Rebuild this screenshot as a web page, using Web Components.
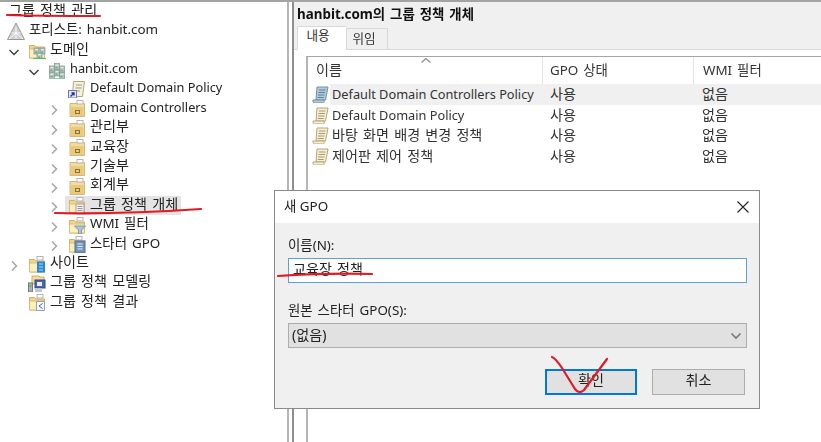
<!doctype html>
<html lang="ko">
<head>
<meta charset="utf-8">
<title>그룹 정책 관리</title>
<style>
  html, body { margin: 0; height: 100%; }
  body {
    width: 821px; height: 442px; overflow: hidden; position: relative;
    font: 13.4px "Noto Sans", "Noto Sans CJK KR", sans-serif;
    color: #222; background: #fff;
  }
  gp-console { height: 100%; }
  gp-console, gp-dialog, gp-marks { filter: blur(.3px); }
</style>
</head>
<body>
<gp-console>
  <gp-tree slot="tree">
    <gp-row x="9" icon="root" label="그룹 정책 관리"></gp-row>
    <gp-row x="29" icon="forest" label="포리스트: hanbit.com"></gp-row>
    <gp-row x="50" arrow="open" icon="domains" label="도메인"></gp-row>
    <gp-row x="70" arrow="open" icon="domain" label="hanbit.com"></gp-row>
    <gp-row x="90" icon="link" label="Default Domain Policy"></gp-row>
    <gp-row x="90" arrow="closed" icon="ou" label="Domain Controllers"></gp-row>
    <gp-row x="90" arrow="closed" icon="ou" label="관리부"></gp-row>
    <gp-row x="90" arrow="closed" icon="ou" label="교육장"></gp-row>
    <gp-row x="90" arrow="closed" icon="ou" label="기술부"></gp-row>
    <gp-row x="90" arrow="closed" icon="ou" label="회계부"></gp-row>
    <gp-row x="90" arrow="closed" icon="gpo-folder" label="그룹 정책 개체" selected></gp-row>
    <gp-row x="90" arrow="closed" icon="wmi" label="WMI 필터"></gp-row>
    <gp-row x="90" arrow="closed" icon="starter" label="스타터 GPO"></gp-row>
    <gp-row x="50" arrow="closed" icon="sites" label="사이트"></gp-row>
    <gp-row x="50" icon="modeling" label="그룹 정책 모델링"></gp-row>
    <gp-row x="50" icon="results" label="그룹 정책 결과"></gp-row>
  </gp-tree>
  <gp-panel slot="panel" heading="hanbit.com의 그룹 정책 개체">
    <gp-policy icon="scroll-blue" name="Default Domain Controllers Policy" selected></gp-policy>
    <gp-policy icon="scroll" name="Default Domain Policy"></gp-policy>
    <gp-policy icon="scroll" name="바탕 화면 배경 변경 정책"></gp-policy>
    <gp-policy icon="scroll" name="제어판 제어 정책"></gp-policy>
  </gp-panel>
</gp-console>
<gp-dialog heading="새 GPO"></gp-dialog>
<gp-marks></gp-marks>

<script>
// Malgun Gothic sets hangul larger and latin smaller than Noto does, so size by script
const tune = el => {
  let text = el.textContent
  let ko = /[가-힣]/.test(text), en = /[a-zA-Z]/.test(text)
  if (en && !ko) el.style.fontSize = '12.75px'
  if (ko && !en) { el.style.fontSize = '14.1px'; el.style.wordSpacing = '1.5px' }
  if (ko && en) el.style.wordSpacing = '1.5px'
}
const tuneAll = root => root.querySelectorAll('.t').forEach(tune)

const tab = (x = 9) => `<rect x="${x}" y="1.500" width="6" height="3.500" fill="#fff" stroke="#b5b5b5"/>`
const folder = (extra = '') => `
  <path d="M1.500 4.500h5l1.500 1.500h8.500v11h-15z" fill="#f2d48a" stroke="#cdb06c"/>
  <path d="M1.500 17V8h15v9z" fill="#fdeeba" stroke="#d8bd7c"/>${extra}`
const server = (x, y) => `<rect x="${x}" y="${y}" width="5" height="6" fill="#b4c2bf" stroke="#82938f" stroke-width=".7"/>
  <rect x="${x + 1}" y="${y + 1.200}" width="3" height="1" fill="#eef3f3"/><rect x="${x + 1}" y="${y + 3.600}" width="2" height="1.200" fill="#4fbf59"/>`
const scroll = (fill, line, dark) => `
  <path d="M5 2h11l-2.500 13h-9.500z" fill="${fill}" stroke="${line}"/>
  <path d="M1 15h11c.6 2-.2 3-1 3H2.500C1.300 18 .700 16.500 1 15z" fill="${fill}" stroke="${line}"/>
  <path d="M7 5h6.500M6.500 7.500H13M6 10h6.500M5.700 12.500h6" stroke="${dark}" stroke-width="1"/>`

const ICONS = {
  root: `<rect x="0" y="3" width="6" height="10" fill="#d8d8d8"/><rect x="0" y="13" width="6" height="5" fill="#7d8fa1"/>`,
  forest: `<path d="M9 1 .500 17.500h17z" fill="#cfcfcf" stroke="#9a9a9a"/><path d="M9 5v12M4.500 11h9M2 17l7-6 7 6" fill="none" stroke="#fff" stroke-width=".9"/>`,
  domains: folder() + server(6, 7) + server(12, 7) + server(9, 12) + `<path d="M5 17.500h13" stroke="#4fbf59"/>`,
  domain: server(1.500, 5) + server(6.500, 2.500) + server(11.500, 5) + server(1.500, 11.500) + server(6.500, 9) + server(11.500, 11.500) + `<path d="M1 17.500h16" stroke="#a5bbb7"/>`,
  link: `<path d="M5.500 1.500h11l-2 15h-10z" fill="#f6f0da" stroke="#b0a684"/><path d="M8 5h6M7.500 8h6M7 11h5" stroke="#a39b78"/><rect x=".500" y="10.500" width="8" height="7.500" fill="#dfe6f5" stroke="#6d7bab"/><path d="M2.500 16.500l3.500-3.500m-2.500 0h2.500v2.500" stroke="#1c2f9a" stroke-width="1.300" fill="none"/>`,
  ou: `<path d="M2 4.500h14.500v13H2z" fill="#f4dc9f" stroke="#d3b878"/><path d="M3 8h12.500v9H3z" fill="#ecc97a"/>` + tab(9) +
    `<rect x="7" y="11" width="5" height="4" fill="#86743a"/><rect x="8.200" y="12" width="2.600" height="2" fill="#ead690"/>`,
  'gpo-folder': folder(tab() + `<path d="M8 8h8v9.500H8z" fill="#f2f2f2" stroke="#a5a5a5"/><path d="M9.500 10.500h5M9.500 12.500h5M9.500 14.500h5" stroke="#969696"/>`),
  wmi: folder(tab() + `<path d="M6.500 10h11l-4 4v4h-3v-4z" fill="#a9c6de" stroke="#7d9ab3"/>`),
  starter: folder(tab(8) + `<rect x="7" y="6" width="10" height="12" fill="#7495bb" stroke="#4d6d94"/><path d="M9.500 9h5M9.500 11.500h5M9.500 14h5" stroke="#e4edf6"/>`),
  sites: folder(tab() + `<rect x="9" y="6.500" width="8" height="11" fill="#2d86d4"/><path d="M11 9h4M11 12h4M11 15h4" stroke="#a9dcf8"/>`),
  modeling: `<path d="M4 2h7l1 1h4v7H4z" fill="#f5dc9a" stroke="#cdb06c"/><rect x="7" y="6" width="10" height="8" fill="#4a66ac" stroke="#334780"/><rect x="9" y="8" width="5" height="4" fill="#e7ecf7"/><rect x=".500" y="9" width="4" height="9" fill="#a8b2b0" stroke="#778"/><rect x="1.500" y="11" width="2" height="2" fill="#4fbf59"/><rect x="7" y="14" width="7" height="4" fill="#c2c6cd"/>`,
  results: folder(tab() + `<path d="M8.500 8.500h8v9h-8z" fill="#f4f6f8" stroke="#98a1ae"/><path d="M14.500 10.500l-3.500 2.500 3.500 2.500" stroke="#3d6ea8" fill="none"/>`),
  scroll: scroll('#f5eed2', '#b3a67e', '#a89b72'),
  'scroll-blue': scroll('#b4cbdc', '#6f8fa6', '#5f7f97')
}

const icon = (name, size = 18) =>
  `<svg width="${size}" height="${size}" viewBox="0 0 18 18" aria-hidden="true">${ICONS[name]}</svg>`

customElements.define('gp-console', class extends HTMLElement {
  constructor() {
    super()
    this.attachShadow({ mode: 'open' }).innerHTML = `
      <style>
        :host { display: grid; grid-template-columns: 287px 1fr; border-top: 2px solid #a3a3a3; box-sizing: border-box; }
        .gap { display: flex; min-width: 0; }
      </style>
      <slot name="tree"></slot>
      <div class="gap"><slot name="panel"></slot></div>`
  }
})

customElements.define('gp-tree', class extends HTMLElement {
  constructor() {
    super()
    this.attachShadow({ mode: 'open' }).innerHTML = `
      <style>
        :host { display: flex; flex-direction: column; margin-top: -.2px; background: #fff; }
      </style>
      <slot></slot>`
  }
})

customElements.define('gp-row', class extends HTMLElement {
  constructor() {
    super()
    this.attachShadow({ mode: 'open' }).innerHTML = `
      <style>
        :host { display: flex; align-items: center; height: 19.4px; white-space: nowrap; }
        .arrow { width: 16px; height: 16px; margin: 4px 6px 0 0; flex: none; }
        .arrow path { fill: none; stroke-width: 1.5; }
        .item { display: flex; align-items: center; height: 19.4px; padding-right: 3px; }
        .item.on { background: #e4e4e4; margin-left: -3px; padding-left: 3px; }
        .label { margin-bottom: 3.400px; line-height: 14px; }
        svg.ico { display: block; margin-right: 4px; flex: none; }
      </style>
      <span class="arrow"></span>
      <span class="item"><span class="ico"></span><span class="label"></span></span>`
  }
  connectedCallback() {
    let s = this.shadowRoot
    let x = Number(this.getAttribute('x'))
    this.style.marginLeft = (x - 44) + 'px'
    let kind = this.getAttribute('arrow')
    if (kind == 'open') s.querySelector('.arrow').innerHTML = `<svg width="16" height="16" viewBox="0 0 16 16"><path d="M3.500 6l4.500 4.500L12.500 6" stroke="#404040"/></svg>`
    if (kind == 'closed') s.querySelector('.arrow').innerHTML = `<svg width="16" height="16" viewBox="0 0 16 16"><path d="M6 3.500l4.500 4.500L6 12.500" stroke="#a6a6a6"/></svg>`
    s.querySelector('.ico').innerHTML = icon(this.getAttribute('icon'))
    s.querySelector('.ico svg').classList.add('ico')
    s.querySelector('.label').textContent = this.getAttribute('label')
    tune(s.querySelector('.label'))
    if (this.hasAttribute('selected')) s.querySelector('.item').classList.add('on')
  }
})

customElements.define('gp-panel', class extends HTMLElement {
  constructor() {
    super()
    this.attachShadow({ mode: 'open' }).innerHTML = `
      <style>
        :host { display: flex; flex-direction: column; flex: 1; min-width: 0; border-left: 2px solid #b4b5bb; box-sizing: border-box; background: #fff; padding-left: 3px; }
        .inner { flex: 1; display: flex; flex-direction: column; border-left: 2px solid #8e8e8e; min-height: 0; background: #f0f0f0; }
        h1 { margin: 0; height: 25px; padding-left: 3px; font-size: 13.4px; font-weight: 700; line-height: 24px; color: #111; white-space: nowrap; }
        .tabs { display: flex; align-items: flex-end; height: 22px; padding-left: 3px; border-bottom: 1px solid #d9d9d9; font-size: 12.6px; }
        .tab { width: 40px; height: 20px; text-align: center; line-height: 20px; border: 1px solid #d9d9d9; border-bottom: 0; color: #333; }
        .tab span { position: relative; left: -3px; }
        .tab.on { width: 48px; height: 23px; line-height: 18px; background: #fff; border-right: 0; margin-bottom: -1px; z-index: 1; }
        .tab.on span { left: -4px; }
        .page { flex: 1; background: #fff; padding: 6px 0 0 12px; display: flex; min-height: 0; }
        .list { flex: 1; border-top: 1px solid #a5a5a5; border-left: 2px solid #b4b5bb; min-width: 0; }
        .head { position: relative; display: grid; grid-template-columns: 235px 151px 1fr; height: 27px; line-height: 26px; color: #333; }
        .head span { padding-left: 8px; border-right: 1px solid #e3e3e3; }
        .head span:nth-of-type(2) { padding-left: 7px; }
        .head span:nth-of-type(3) { border-right: 0; padding-left: 9px; }
        .sort { position: absolute; left: 112px; top: 0; }
      </style>
      <div class="inner">
        <h1 class="t"></h1>
        <div class="tabs"><div class="tab on"><span>내용</span></div><div class="tab"><span>위임</span></div></div>
        <div class="page"><div class="list">
          <div class="head">
            <span class="t">이름</span><span class="t">GPO 상태</span><span class="t">WMI 필터</span>
            <svg class="sort" width="12" height="7" viewBox="0 0 12 7"><path d="M1.500 5.500 6 1.500l4.500 4" fill="none" stroke="#8a8a8a" stroke-width="1.200"/></svg>
          </div>
          <slot></slot>
        </div></div>
      </div>`
  }
  connectedCallback() {
    let s = this.shadowRoot
    s.querySelector('h1').textContent = this.getAttribute('heading')
    tuneAll(s)
    s.querySelector('h1').style.fontSize = '13.4px'
  }
})

customElements.define('gp-policy', class extends HTMLElement {
  constructor() {
    super()
    this.attachShadow({ mode: 'open' }).innerHTML = `
      <style>
        :host { display: grid; grid-template-columns: 235px 152px 1fr; height: 20.500px; line-height: 20.500px; white-space: nowrap; color: #333; }
        .name { display: flex; align-items: center; padding-left: 4px; }
        .i { display: flex; flex: none; }
        .cell { padding-left: 7px; }
        :host([selected]) .cell, :host([selected]) .text { background: #f0f0f0; }
        .text { flex: 1; padding-left: 2px; }
      </style>
      <div class="name"><span class="i"></span><span class="text"></span></div>
      <div class="cell t">사용</div><div class="cell t">없음</div>`
  }
  connectedCallback() {
    let s = this.shadowRoot
    s.querySelector('.i').innerHTML = icon(this.getAttribute('icon'))
    s.querySelector('.text').textContent = this.getAttribute('name')
    tune(s.querySelector('.text'))
    tuneAll(s)
  }
})

customElements.define('gp-dialog', class extends HTMLElement {
  constructor() {
    super()
    this.attachShadow({ mode: 'open' }).innerHTML = `
      <style>
        :host { position: absolute; left: 274px; top: 190px; width: 486px; height: 219px; box-sizing: border-box; border: 1px solid #8a8a8a; background: #f0f0f0; display: flex; flex-direction: column; color: #222; }
        .title { height: 32px; box-sizing: border-box; background: #fff; display: flex; align-items: center; justify-content: space-between; padding: 0 9px 5px 9px; }
        .title svg { position: relative; top: 2px; }
        .body { flex: 1; padding: 12px 12px 0 13px; display: flex; flex-direction: column; }
        label { display: block; line-height: 20px; }
        .field { height: 25px; box-sizing: border-box; background: #fff; border: 1px solid #5aa2dc; margin-top: 3px; line-height: 19px; padding-left: 4px; }
        .combo { height: 25px; box-sizing: border-box; background: #e1e1e1; border: 1px solid #adadad; margin-top: 3px; padding: 0 4px 3px 3px; display: flex; justify-content: space-between; align-items: center; }
        .combo svg { margin-top: 3px; }
        .second { margin-top: 17px; }
        .buttons { display: flex; justify-content: flex-end; gap: 15px; margin-top: 21px; padding-right: 2px; }
        .btn { width: 93px; height: 26px; box-sizing: border-box; background: #e1e1e1; border: 1px solid #adadad; text-align: center; line-height: 20px; }
        .btn.def { width: 92px; border: 2px solid #0078d7; line-height: 18px; }
      </style>
      <div class="title">
        <span class="h"></span>
        <svg width="14" height="14" viewBox="0 0 14 14"><path d="M1.500 1.500l11 11M12.500 1.500l-11 11" stroke="#222" stroke-width="1.100"/></svg>
      </div>
      <div class="body">
        <label class="t">이름(N):</label>
        <div class="field"><span class="t">교육장 정책</span></div>
        <label class="second t">원본 스타터 GPO(S):</label>
        <div class="combo"><span class="t">(없음)</span><svg width="12" height="8" viewBox="0 0 12 8"><path d="M1.500 1.500 6 6l4.500-4.500" fill="none" stroke="#7a7a7a" stroke-width="1.600"/></svg></div>
        <div class="buttons"><div class="btn def"><span class="t">확인</span></div><div class="btn"><span class="t">취소</span></div></div>
      </div>`
  }
  connectedCallback() {
    let s = this.shadowRoot
    s.querySelector('.h').textContent = this.getAttribute('heading')
    tuneAll(s)
  }
})

// red pen strokes drawn over the screenshot
customElements.define('gp-marks', class extends HTMLElement {
  constructor() {
    super()
    this.attachShadow({ mode: 'open' }).innerHTML = `
      <style>
        :host { position: absolute; inset: 0; pointer-events: none; }
        svg { display: block; }
        path { fill: none; stroke: #e01b24; stroke-width: 2.200; stroke-linecap: round; stroke-linejoin: round; }
      </style>
      <svg width="821" height="442" viewBox="0 0 821 442">
        <path d="M7 15c30 1 65 1 93 1"/>
        <path d="M55 213c45 1 100-1 146-4"/>
        <path d="M278 276c30-2 62-3 94-2"/>
        <path d="M552 357c3 1 6 5 10 11l13 21c3 4 6 4 9 1l23-31"/>
      </svg>`
  }
})
</script>
</body>
</html>
